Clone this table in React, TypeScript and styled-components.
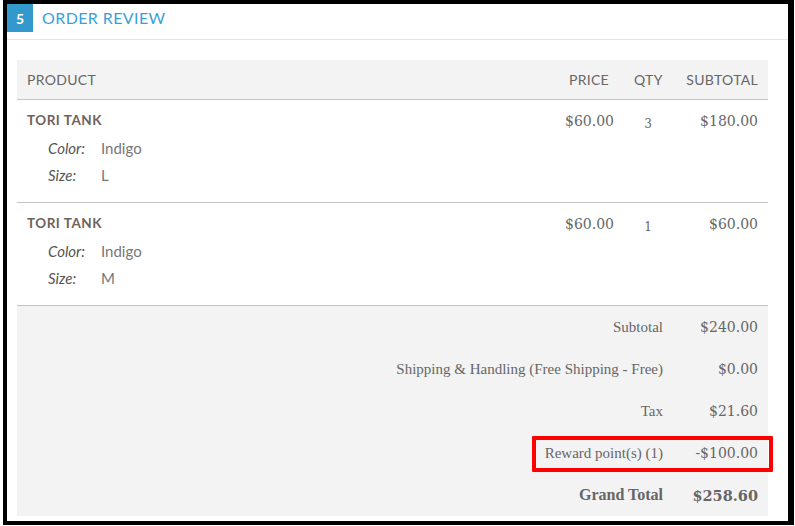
import React from 'react';
import styled, { createGlobalStyle } from 'styled-components';

const GlobalStyle = createGlobalStyle`
    html, body {
        margin: 0;
        padding: 0;
        background: #fff;
    }
`;

const Frame = styled.div`
    box-sizing: border-box;
    margin-left: 3px;
    width: 791px;
    height: 525px;
    border: 4px solid #000;
    border-right-width: 6px;
    display: flex;
    flex-direction: column;
    font-family: Lato, 'Open Sans', sans-serif;
    color: #666;
`;

const SectionHeader = styled.div`
    display: flex;
    align-items: flex-start;
    gap: 9px;
    height: 35px;
    border-bottom: 1px solid #e6e6e6;
`;

const StepBadge = styled.div`
    width: 26px;
    height: 28px;
    background: #3399cc;
    color: #fff;
    font-weight: 700;
    font-size: 14px;
    display: flex;
    align-items: center;
    justify-content: center;
`;

const SectionTitle = styled.h2`
    margin: 0;
    font-size: 16px;
    font-weight: 400;
    line-height: 28px;
    color: #3a9fd8;
    letter-spacing: 0.4px;
`;

const Content = styled.div`
    padding: 20px 20px 0 10px;
`;

const columns = '528px 79px 48px 96px';

const HeadRow = styled.div`
    display: grid;
    grid-template-columns: ${columns};
    height: 39px;
    align-items: center;
    background: #f3f3f3;
    border-bottom: 1px solid #c4c4c4;
    font-size: 14px;
    letter-spacing: 0.3px;
    color: #666;
`;

const HeadCell = styled.div<{ $align?: string; $pad?: number }>`
    text-align: ${(p) => p.$align || 'left'};
    padding: 0 ${(p) => p.$pad ?? 10}px 0 10px;
`;

const ItemRow = styled.div`
    display: grid;
    grid-template-columns: ${columns};
    align-items: start;
    padding: 10px 0 14px;
    border-bottom: 1px solid #c4c4c4;
`;

const ProductCell = styled.div`
    padding: 0 10px;
`;

const ProductName = styled.div`
    font-size: 13.5px;
    font-weight: 700;
    line-height: 20px;
    color: #6e625c;
    letter-spacing: 0.5px;
`;

const Options = styled.dl`
    margin: 4px 0 0 21px;
    display: grid;
    grid-template-columns: 53px auto;
    grid-auto-rows: 27px;
    align-items: center;
    font-size: 15px;
`;

const OptionLabel = styled.dt`
    font-style: italic;
    color: #555;
`;

const OptionValue = styled.dd`
    margin: 0;
    color: #777;
`;

const MoneyCell = styled.div`
    font-family: 'DejaVu Serif', Georgia, serif;
    font-size: 14px;
    line-height: 22px;
    text-align: right;
    padding: 0 10px;
    color: #666;
`;

const QtyCell = styled.div`
    font-family: 'DejaVu Serif', Georgia, serif;
    font-size: 12px;
    line-height: 22px;
    padding-top: 3px;
    text-align: center;
    color: #666;
`;

const Totals = styled.div`
    background: #f3f3f3;
`;

const TotalRow = styled.div<{ $strong?: boolean }>`
    position: relative;
    display: grid;
    grid-template-columns: 1fr 95px;
    height: 42px;
    align-items: center;
    font-weight: ${(p) => (p.$strong ? 700 : 400)};
    color: #666;
`;

const TotalLabel = styled.div<{ $strong?: boolean }>`
    font-family: 'Liberation Serif', 'Times New Roman', serif;
    font-size: ${(p) => (p.$strong ? '16px' : '15px')};
    text-align: right;
    padding-right: 10px;
`;

const TotalValue = styled.div<{ $strong?: boolean }>`
    font-family: 'DejaVu Serif', Georgia, serif;
    text-align: right;
    padding-right: 10px;
    font-size: ${(p) => (p.$strong ? '14.5px' : '14px')};
`;

const Highlight = styled.div`
    position: absolute;
    top: 4px;
    bottom: 2px;
    right: -5px;
    width: 241px;
    box-sizing: border-box;
    border: 4px solid #ff0000;
    border-radius: 1px;
    pointer-events: none;
`;

type Item = { name: string; color: string; size: string; price: string; qty: string; subtotal: string };

const items: Item[] = [
    { name: 'Tori Tank', color: 'Indigo', size: 'L', price: '$60.00', qty: '3', subtotal: '$180.00' },
    { name: 'Tori Tank', color: 'Indigo', size: 'M', price: '$60.00', qty: '1', subtotal: '$60.00' },
];

const totals = [
    { label: 'Subtotal', value: '$240.00' },
    { label: 'Shipping & Handling (Free Shipping - Free)', value: '$0.00' },
    { label: 'Tax', value: '$21.60' },
    { label: 'Reward point(s) (1)', value: '-$100.00', highlight: true },
    { label: 'Grand Total', value: '$258.60', strong: true },
];

const App: React.FC = () => {
    return (
        <>
            <GlobalStyle />
            <Frame>
                <SectionHeader>
                    <StepBadge>5</StepBadge>
                    <SectionTitle>ORDER REVIEW</SectionTitle>
                </SectionHeader>
                <Content>
                    <HeadRow>
                        <HeadCell>PRODUCT</HeadCell>
                        <HeadCell $align="right" $pad={15}>PRICE</HeadCell>
                        <HeadCell $align="center">QTY</HeadCell>
                        <HeadCell $align="right">SUBTOTAL</HeadCell>
                    </HeadRow>
                    {items.map((item, i) => (
                        <ItemRow key={i}>
                            <ProductCell>
                                <ProductName>{item.name.toUpperCase()}</ProductName>
                                <Options>
                                    <OptionLabel>Color:</OptionLabel>
                                    <OptionValue>{item.color}</OptionValue>
                                    <OptionLabel>Size:</OptionLabel>
                                    <OptionValue>{item.size}</OptionValue>
                                </Options>
                            </ProductCell>
                            <MoneyCell>{item.price}</MoneyCell>
                            <QtyCell>{item.qty}</QtyCell>
                            <MoneyCell>{item.subtotal}</MoneyCell>
                        </ItemRow>
                    ))}
                    <Totals>
                        {totals.map((t) => (
                            <TotalRow key={t.label} $strong={t.strong}>
                                <TotalLabel $strong={t.strong}>{t.label}</TotalLabel>
                                <TotalValue $strong={t.strong}>{t.value}</TotalValue>
                                {t.highlight && <Highlight />}
                            </TotalRow>
                        ))}
                    </Totals>
                </Content>
            </Frame>
        </>
    );
};

export default App;
